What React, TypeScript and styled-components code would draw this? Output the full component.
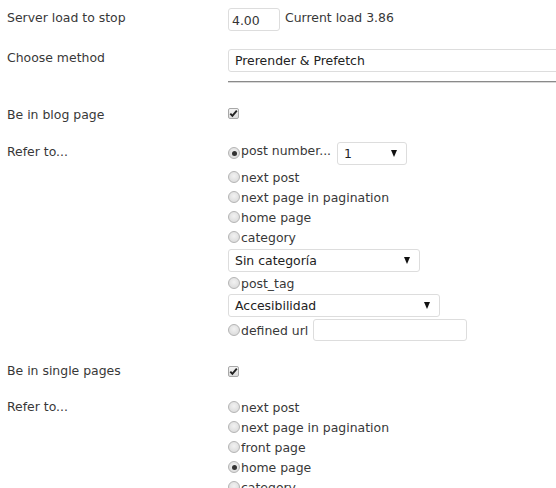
import React from "react";
import styled, { createGlobalStyle } from "styled-components";

const Global = createGlobalStyle`
  html, body { margin: 0; padding: 0; background: #fff; overflow: hidden; }
  body { font-family: "DejaVu Sans", Verdana, sans-serif; font-size: 12.45px; color: #383838; }
`;

const Page = styled.div`
  width: 556px;
  height: 488px;
  overflow: hidden;
  padding-left: 7px;
  box-sizing: border-box;
`;

const Row = styled.div<{ $top: number }>`
  display: grid;
  grid-template-columns: 221px 1fr;
  margin-top: ${(p) => p.$top}px;
`;

const Label = styled.div<{ $pad?: number; $lh?: number }>`
  padding-top: ${(p) => p.$pad ?? 0}px;
  line-height: ${(p) => p.$lh ?? 15}px;
  white-space: nowrap;
`;

const Field = styled.div`
  display: flex;
  flex-direction: column;
  align-items: flex-start;
  min-width: 0;
`;

const Inline = styled.div<{ $gap?: number }>`
  display: flex;
  align-items: flex-start;
  gap: ${(p) => p.$gap ?? 0}px;
  white-space: nowrap;
`;

const TextInput = styled.div<{ $w: number; $h?: number }>`
  width: ${(p) => p.$w}px;
  height: ${(p) => p.$h ?? 23}px;
  box-sizing: border-box;
  border: 1px solid #ddd;
  border-radius: 3px;
  background: #fff;
  padding: 4px 0 0 3px;
  line-height: 15px;
  color: #333;
`;

const Note = styled.span`
  line-height: 15px;
  padding-top: 2px;
`;

const SelectBox = styled.div<{ $w: number; $mt?: number; $mb?: number }>`
  width: ${(p) => p.$w}px;
  height: 23px;
  box-sizing: border-box;
  border: 1px solid #ddd;
  border-radius: 3px;
  background: #fff;
  display: flex;
  align-items: center;
  justify-content: space-between;
  padding: 0 9px 0 6px;
  margin-top: ${(p) => p.$mt ?? 0}px;
  margin-bottom: ${(p) => p.$mb ?? 0}px;
  color: #222;
  flex-shrink: 0;
  white-space: nowrap;
`;

const Arrow = styled.span`
  width: 0;
  height: 0;
  border-left: 3.5px solid transparent;
  border-right: 3.5px solid transparent;
  border-top: 7px solid #111;
`;

const Divider = styled.div`
  width: 330px;
  height: 0;
  border-top: 1px solid #8a8a8a;
  border-bottom: 1px solid #d8d8d8;
  margin-top: 9px;
`;

const Check = styled.span`
  width: 11px;
  height: 11px;
  box-sizing: border-box;
  border: 1px solid #a8a8a8;
  border-radius: 2px;
  background: linear-gradient(#f4f4f4, #dcdcdc);
  margin-top: 3px;
  display: flex;
  align-items: center;
  justify-content: center;
`;

const Option = styled.label<{ $h?: number }>`
  display: flex;
  align-items: center;
  height: ${(p) => p.$h ?? 20}px;
  line-height: 15px;
  white-space: nowrap;
`;

const Radio = styled.span<{ $on?: boolean }>`
  width: 12px;
  height: 12px;
  box-sizing: border-box;
  border-radius: 50%;
  border: 1px solid #b4b4b4;
  background: radial-gradient(circle at 50% 40%, #f2f2f2, #d6d6d6);
  margin-right: 1px;
  display: flex;
  align-items: center;
  justify-content: center;
  flex-shrink: 0;
  &::after {
    content: "";
    display: ${(p) => (p.$on ? "block" : "none")};
    width: 5px;
    height: 5px;
    border-radius: 50%;
    background: #333;
  }
`;

const FirstLine = styled.div`
  display: flex;
  align-items: flex-start;
  gap: 6px;
  height: 25px;
`;

const FirstOpt = styled.span`
  display: flex;
  align-items: flex-start;
  line-height: 16px;
  padding-top: 1px;
  white-space: nowrap;
`;

const RadioTop = styled(Radio)`
  margin-top: 4px;
`;

const UrlLine = styled.div`
  display: flex;
  align-items: center;
  gap: 5px;
  margin-top: 2px;
`;

const CheckMark = () => (
  <svg width="9" height="9" viewBox="0 0 9 9">
    <path d="M1.3 4.6 L3.4 6.9 L7.8 1.6" fill="none" stroke="#222" strokeWidth="1.9" />
  </svg>
);

export default function App() {
  return (
    <Page>
      <Global />
      <Row $top={8}>
        <Label $pad={2}>Server load to stop</Label>
        <Inline $gap={5}>
          <TextInput $w={52}>4.00</TextInput>
          <Note>Current load 3.86</Note>
        </Inline>
      </Row>

      <Row $top={18}>
        <Label $pad={1}>Choose method</Label>
        <Field>
          <SelectBox $w={360}>Prerender &amp; Prefetch</SelectBox>
          <Divider />
        </Field>
      </Row>

      <Row $top={22}>
        <Label $pad={2}>Be in blog page</Label>
        <Field>
          <Check>
            <CheckMark />
          </Check>
        </Field>
      </Row>

      <Row $top={20}>
        <Label $lh={20}>Refer to...</Label>
        <Field>
          <FirstLine>
            <FirstOpt>
              <RadioTop $on />
              post number...
            </FirstOpt>
            <SelectBox $w={70}>
              1<Arrow />
            </SelectBox>
          </FirstLine>
          <Option>
            <Radio />
            next post
          </Option>
          <Option>
            <Radio />
            next page in pagination
          </Option>
          <Option>
            <Radio />
            home page
          </Option>
          <Option>
            <Radio />
            category
          </Option>
          <SelectBox $w={192} $mt={2} $mb={1}>
            Sin categoría<Arrow />
          </SelectBox>
          <Option>
            <Radio />
            post_tag
          </Option>
          <SelectBox $w={212} $mt={1} $mb={0}>
            Accesibilidad<Arrow />
          </SelectBox>
          <UrlLine>
            <Option>
              <Radio />
              defined url
            </Option>
            <TextInput $w={154} $h={22} />
          </UrlLine>
        </Field>
      </Row>

      <Row $top={22}>
        <Label $pad={0}>Be in single pages</Label>
        <Field>
          <Check>
            <CheckMark />
          </Check>
        </Field>
      </Row>

      <Row $top={19}>
        <Label $lh={20} $pad={0}>Refer to...</Label>
        <Field>
          <Option>
            <Radio />
            next post
          </Option>
          <Option>
            <Radio />
            next page in pagination
          </Option>
          <Option>
            <Radio />
            front page
          </Option>
          <Option>
            <Radio $on />
            home page
          </Option>
          <Option>
            <Radio />
            category
          </Option>
        </Field>
      </Row>
    </Page>
  );
}
